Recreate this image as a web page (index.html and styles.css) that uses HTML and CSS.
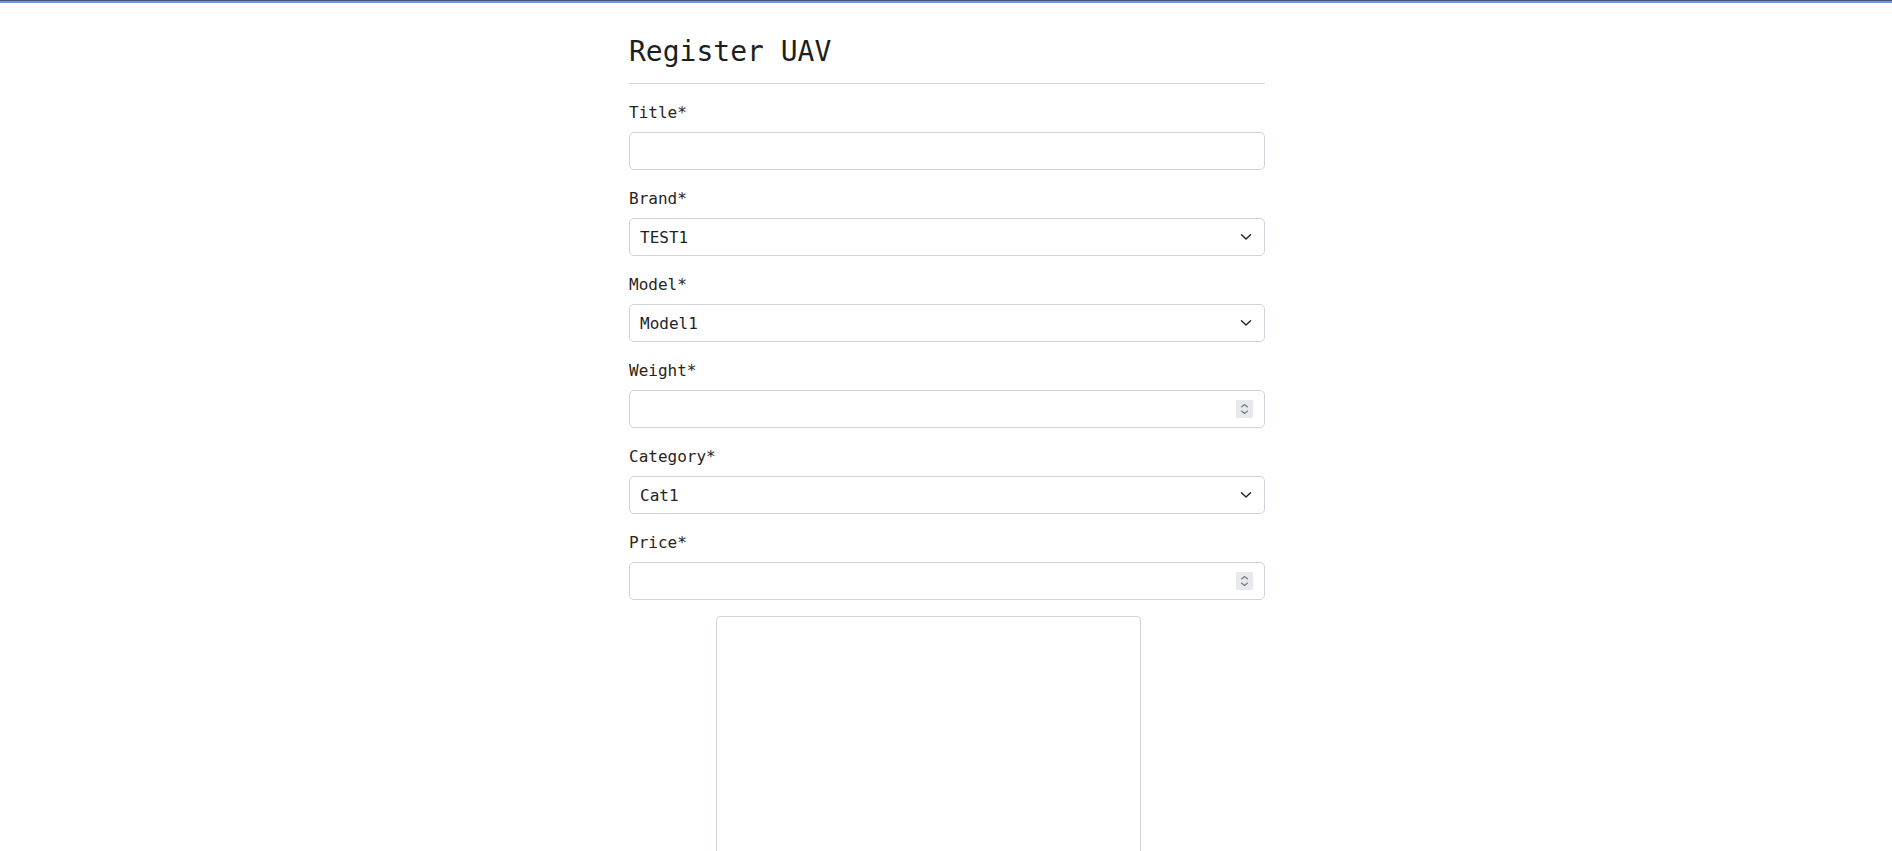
FILE: index.html
```html
<!DOCTYPE html>
<html lang="en">
<head>
<meta charset="utf-8">
<title>Register UAV</title>
<link rel="stylesheet" href="styles.css">
</head>
<body>
<div class="topbar"></div>
<main class="page">
  <h1 class="heading">Register UAV</h1>
  <hr class="rule">
  <form class="form">
    <div class="field">
      <label class="label" for="title">Title*</label>
      <input class="control" id="title" type="text">
    </div>
    <div class="field">
      <label class="label" for="brand">Brand*</label>
      <div class="wrap">
        <select class="control select" id="brand"><option>TEST1</option></select>
        <svg class="chevron" width="12" height="8" viewBox="0 0 12 8"><path d="M1.5 1.8 L6 6 L10.5 1.8" fill="none" stroke="#1f2937" stroke-width="1.5" stroke-linecap="round" stroke-linejoin="round"/></svg>
      </div>
    </div>
    <div class="field">
      <label class="label" for="model">Model*</label>
      <div class="wrap">
        <select class="control select" id="model"><option>Model1</option></select>
        <svg class="chevron" width="12" height="8" viewBox="0 0 12 8"><path d="M1.5 1.8 L6 6 L10.5 1.8" fill="none" stroke="#1f2937" stroke-width="1.5" stroke-linecap="round" stroke-linejoin="round"/></svg>
      </div>
    </div>
    <div class="field">
      <label class="label" for="weight">Weight*</label>
      <div class="wrap">
        <input class="control number" id="weight" type="number">
        <svg class="spin" width="17" height="18" viewBox="0 0 17 18"><rect width="17" height="18" rx="1" fill="#e7e9ed"/><path d="M5.5 7 L8.5 4.5 L11.5 7 M5.5 11 L8.5 13.5 L11.5 11" fill="none" stroke="#737982" stroke-width="1.1" stroke-linecap="round" stroke-linejoin="round"/></svg>
      </div>
    </div>
    <div class="field">
      <label class="label" for="category">Category*</label>
      <div class="wrap">
        <select class="control select" id="category"><option>Cat1</option></select>
        <svg class="chevron" width="12" height="8" viewBox="0 0 12 8"><path d="M1.5 1.8 L6 6 L10.5 1.8" fill="none" stroke="#1f2937" stroke-width="1.5" stroke-linecap="round" stroke-linejoin="round"/></svg>
      </div>
    </div>
    <div class="field">
      <label class="label" for="price">Price*</label>
      <div class="wrap">
        <input class="control number" id="price" type="number">
        <svg class="spin" width="17" height="18" viewBox="0 0 17 18"><rect width="17" height="18" rx="1" fill="#e7e9ed"/><path d="M5.5 7 L8.5 4.5 L11.5 7 M5.5 11 L8.5 13.5 L11.5 11" fill="none" stroke="#737982" stroke-width="1.1" stroke-linecap="round" stroke-linejoin="round"/></svg>
      </div>
    </div>
    <div class="pad"></div>
  </form>
</main>
</body>
</html>
```
FILE: styles.css
```css
html, body {
  margin: 0;
  padding: 0;
  background: #ffffff;
}
body {
  font-family: "DejaVu Sans Mono", "Liberation Mono", monospace;
  color: #1f2328;
  overflow: hidden;
}
.topbar {
  height: 2px;
  border-top: 1px solid #46557c;
  background: #6796e3;
}
.page {
  width: 636px;
  margin-left: calc(50% - 317px);
  padding-top: 32px;
}
.heading {
  margin: 0;
  font-size: 28px;
  line-height: 34px;
  font-weight: 400;
  color: #1c1e21;
}
.rule {
  margin: 14px 0 0;
  border: 0;
  border-top: 1px solid #cdd1d6;
  height: 0;
}
.form {
  display: flex;
  flex-direction: column;
  gap: 16px;
  padding-top: 16px;
}
.field {
  display: flex;
  flex-direction: column;
  gap: 7px;
}
.label {
  font-size: 16px;
  line-height: 24px;
  padding-top: 1px;
  color: #2a2420;
}
.control {
  box-sizing: border-box;
  display: block;
  width: 100%;
  height: 38px;
  margin: 0;
  padding: 0 10px;
  border: 1px solid #cfd4da;
  border-radius: 5px;
  background: #fff;
  font-family: "DejaVu Sans Mono", "Liberation Mono", monospace;
  font-size: 16px;
  color: #1f2328;
  outline: none;
}
.wrap {
  position: relative;
}
.select {
  appearance: none;
  -webkit-appearance: none;
  padding-right: 36px;
}
.chevron {
  position: absolute;
  right: 13px;
  top: 15px;
  pointer-events: none;
}
.number {
  padding-right: 36px;
  -moz-appearance: textfield;
}
.number::-webkit-inner-spin-button,
.number::-webkit-outer-spin-button {
  -webkit-appearance: none;
  margin: 0;
}
.spin {
  position: absolute;
  right: 12px;
  top: 10px;
  pointer-events: none;
}
.pad {
  box-sizing: border-box;
  width: 425px;
  height: 420px;
  margin-left: 87px;
  border: 1px solid #cfd4da;
  border-radius: 4px;
  background: #fff;
}
```
